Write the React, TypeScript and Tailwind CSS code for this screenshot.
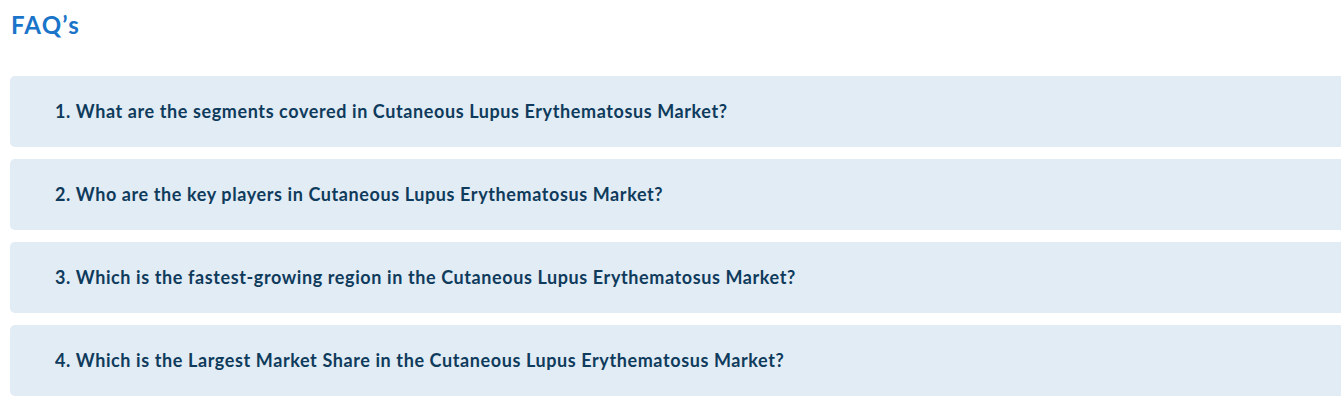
import React from 'react';

const faqs = [
  '1. What are the segments covered in Cutaneous Lupus Erythematosus Market?',
  '2. Who are the key players in Cutaneous Lupus Erythematosus Market?',
  '3. Which is the fastest-growing region in the Cutaneous Lupus Erythematosus Market?',
  '4. Which is the Largest Market Share in the Cutaneous Lupus Erythematosus Market?',
];

const App: React.FC = () => {
  return (
    <div className="w-[1341px] h-[402px] overflow-hidden bg-white font-['Lato','Noto_Sans',sans-serif]">
      <h2 className="pl-[11px] pt-[9px] text-[24px] leading-[32px] font-bold tracking-[1.2px] text-[#1a74c9]">FAQ’s</h2>
      <div className="mt-[35px] pl-[10px] flex flex-col gap-[12px]">
        {faqs.map((q) => (
          <div
            key={q}
            className="h-[71px] w-[1340px] rounded-l-[5px] bg-[#e2ecf5] flex items-center pl-[45px]"
          >
            <span className="text-[18px] font-bold tracking-[0.6px] text-[#0f3b5c]">{q}</span>
          </div>
        ))}
      </div>
    </div>
  );
};

export default App;
